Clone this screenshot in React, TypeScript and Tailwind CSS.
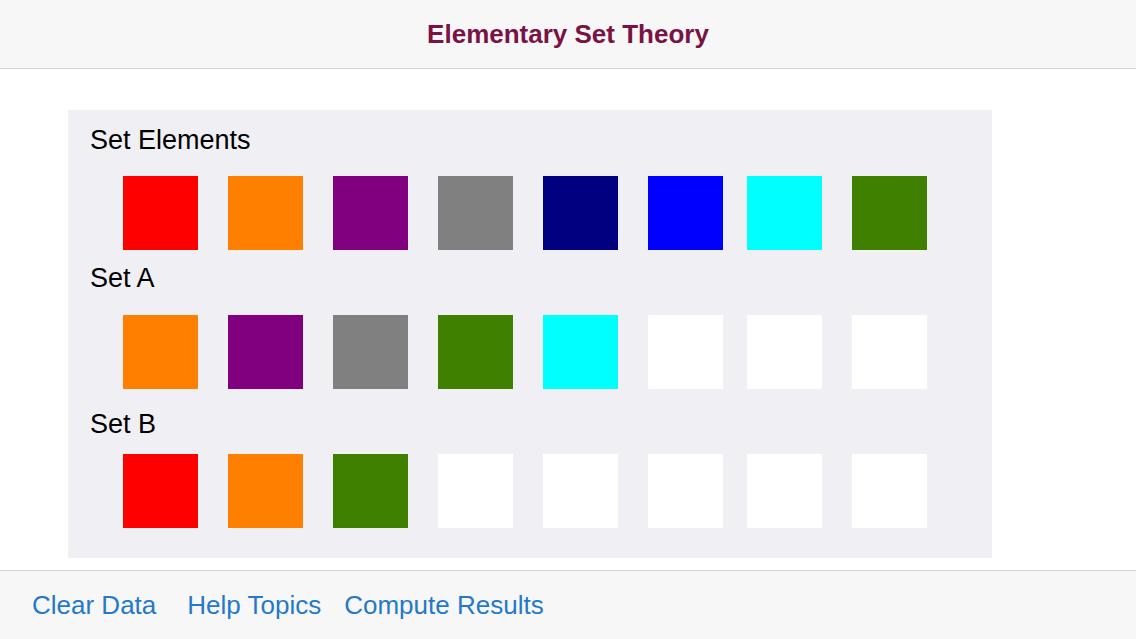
import React from 'react'

const ELEMENTS = ['#ff0000', '#ff8000', '#800080', '#808080', '#000080', '#0000ff', '#00ffff', '#408000']

const SETS: { label: string; colors: string[]; labelGap: string; rowGap: string }[] = [
  { label: 'Set A', colors: ['#ff8000', '#800080', '#808080', '#408000', '#00ffff'], labelGap: 'mt-[13px]', rowGap: 'mt-[22px]' },
  { label: 'Set B', colors: ['#ff0000', '#ff8000', '#408000'], labelGap: 'mt-[20px]', rowGap: 'mt-[15px]' },
]

function SwatchRow({ colors, className }: { colors: string[]; className?: string }) {
  const cells = Array.from({ length: 8 }, (_, i) => colors[i] ?? '#ffffff')
  return (
    <div className={`flex pl-[55px] ${className ?? ''}`}>
      {cells.map((c, i) => (
        <div
          key={i}
          className={`h-[74px] w-[75px] shrink-0 ${i === 0 ? '' : i === 6 ? 'ml-[24px]' : 'ml-[30px]'}`}
          style={{ backgroundColor: c }}
        />
      ))}
    </div>
  )
}

export default function App() {
  return (
    <div className="flex h-[639px] w-[1136px] flex-col bg-white font-['Liberation_Sans',Arial,sans-serif]">
      <header className="flex h-[69px] shrink-0 items-center justify-center border-b border-[#d3d3d6] bg-[#f7f7f8]">
        <h1 className="text-[26px] font-bold text-[#7a1244]">Elementary Set Theory</h1>
      </header>

      <main className="flex-1 bg-white pl-[68px] pt-[41px]">
        <section className="w-[924px] bg-[#efeff4] pb-[30px] pt-[15px]">
          <div className="pl-[22px] text-[27px] leading-[30px] text-black">Set Elements</div>
          <SwatchRow colors={ELEMENTS} className="mt-[21px]" />
          {SETS.map((s) => (
            <React.Fragment key={s.label}>
              <div className={`pl-[22px] text-[27px] leading-[30px] text-black ${s.labelGap}`}>{s.label}</div>
              <SwatchRow colors={s.colors} className={s.rowGap} />
            </React.Fragment>
          ))}
        </section>
      </main>

      <footer className="flex h-[69px] shrink-0 items-center border-t border-[#d3d3d6] bg-[#f7f7f8] pl-[32px] text-[26px] text-[#2479c9]">
        <button>Clear Data</button>
        <button className="ml-[31px]">Help Topics</button>
        <button className="ml-[23px]">Compute Results</button>
      </footer>
    </div>
  )
}
